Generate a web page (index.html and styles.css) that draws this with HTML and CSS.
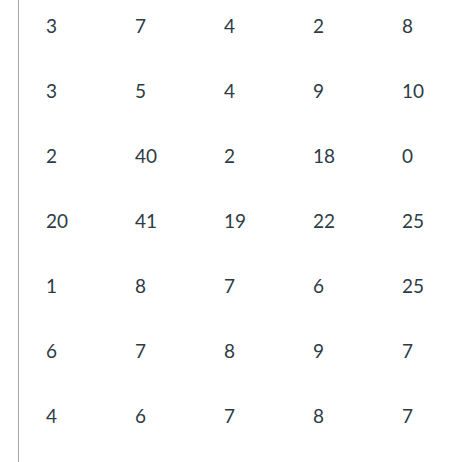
FILE: index.html
```html
<!DOCTYPE html>
<html>
<head>
<meta charset="utf-8">
<link rel="stylesheet" href="styles.css">
</head>
<body>
<div class="panel">
<table class="grid">
<tr><td>3</td><td>7</td><td>4</td><td>2</td><td>8</td></tr>
<tr><td>3</td><td>5</td><td>4</td><td>9</td><td>10</td></tr>
<tr><td>2</td><td>40</td><td>2</td><td>18</td><td>0</td></tr>
<tr><td>20</td><td>41</td><td>19</td><td>22</td><td>25</td></tr>
<tr><td>1</td><td>8</td><td>7</td><td>6</td><td>25</td></tr>
<tr><td>6</td><td>7</td><td>8</td><td>9</td><td>7</td></tr>
<tr><td>4</td><td>6</td><td>7</td><td>8</td><td>7</td></tr>
</table>
</div>
</body>
</html>
```
FILE: styles.css
```css
html, body {
  margin: 0;
  padding: 0;
  background: #fff;
  height: 100%;
  overflow: hidden;
}
.panel {
  display: flow-root;
  margin-left: 18px;
  border-left: 1px solid #a8a8a8;
  height: 100%;
  box-sizing: border-box;
}
.grid {
  border-collapse: collapse;
  margin-top: -7px;
  font-family: Lato, "Liberation Sans", sans-serif;
  font-size: 19px;
  color: #2d3b45;
}
.grid td {
  width: 89px;
  height: 65px;
  padding: 0 0 0 27px;
  box-sizing: border-box;
  vertical-align: middle;
  line-height: 22px;
}
```
